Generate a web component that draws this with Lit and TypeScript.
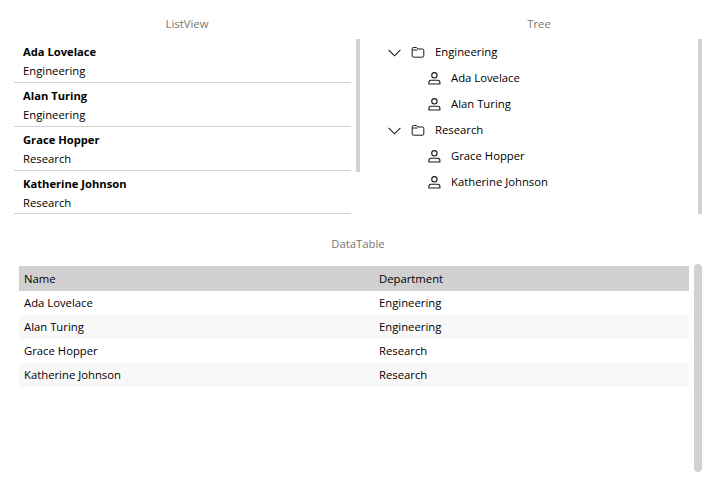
import { LitElement, html, css, svg } from 'lit';
import { customElement } from 'lit/decorators.js';

const PEOPLE = [
  { name: 'Ada Lovelace', dept: 'Engineering' },
  { name: 'Alan Turing', dept: 'Engineering' },
  { name: 'Grace Hopper', dept: 'Research' },
  { name: 'Katherine Johnson', dept: 'Research' },
];

const chevron = svg`<path d="M0.6 4.8 L6.5 10.8 L12.4 4.8" fill="none" stroke="#1a1a1a" stroke-width="1.1"/>`;
const folder = svg`<path d="M1.2 3.6 Q1.2 2.5 2.4 2.5 H5.5 L7 4 H11.6 Q12.8 4 12.8 5.2 V11 Q12.8 12.2 11.6 12.2 H2.4 Q1.2 12.2 1.2 11 Z M1.2 5 H6.5" fill="none" stroke="#1a1a1a" stroke-width="1"/>`;
const person = svg`<circle cx="6.4" cy="4.3" r="2.7" fill="none" stroke="#1a1a1a" stroke-width="1.1"/><path d="M0.9 13 V11.5 Q0.9 9.3 3 9.3 H9.8 Q11.9 9.3 11.9 11.5 V13 Z" fill="none" stroke="#1a1a1a" stroke-width="1.1"/>`;

@customElement('app-root')
export class AppRoot extends LitElement {
  static styles = css`
    :host {
      display: block;
      width: 716px;
      height: 486px;
      background: #fff;
      color: #000;
      font-family: 'Open Sans', 'Noto Sans', sans-serif;
      font-size: 11.3px;
      overflow: hidden;
    }

    .top {
      display: grid;
      grid-template-columns: 346px 326px;
      column-gap: 16px;
      padding: 0 14px;
      height: 234px;
    }

    .title {
      height: 39px;
      line-height: 48px;
      text-align: center;
      color: #767676;
    }

    .body {
      display: flex;
      height: 175px;
    }

    .list {
      width: 337px;
    }

    .list-item {
      height: 43px;
      padding-left: 9px;
      border-bottom: 1px solid #d2d2d2;
    }

    .list-item:last-child {
      height: 42px;
    }

    .list-item .name {
      font-weight: 700;
      font-size: 11.2px;
      line-height: 26px;
      height: 24px;
    }

    .list-item .dept {
      line-height: 16px;
    }

    .bar {
      background: #d2d2d2;
      width: 4px;
    }

    .list-bar {
      margin-left: 5px;
      height: 133px;
    }

    .tree {
      width: 322px;
    }

    .tree-row {
      display: flex;
      align-items: center;
      height: 26px;
      padding-left: 12px;
    }

    .tree-row span {
      margin-bottom: 2px;
    }

    .tree-row.leaf {
      padding-left: 52px;
    }

    .tree-row svg {
      width: 14px;
      height: 14px;
      flex: none;
    }

    .tree-row .folder {
      margin-left: 9px;
      margin-right: 10px;
    }

    .tree-row.leaf svg {
      margin-right: 9px;
    }

    .lower-title {
      height: 30px;
      line-height: 20px;
      text-align: center;
      color: #767676;
    }

    .lower {
      display: flex;
      padding-left: 19px;
    }

    .table {
      width: 670px;
      margin-top: 2px;
    }

    .row {
      display: grid;
      grid-template-columns: 355px 1fr;
      height: 24px;
      line-height: 24px;
      padding-left: 5px;
    }

    .row.head {
      height: 25px;
      line-height: 25px;
      background: #d0d0d0;
    }

    .row:nth-child(odd):not(.head) {
      background: #f8f8f8;
    }

    .table-bar {
      width: 8px;
      height: 208px;
      margin-left: 5px;
      border-radius: 4px;
    }
  `;

  render() {
    const groups = ['Engineering', 'Research'];
    return html`
      <div class="top">
        <section>
          <div class="title">ListView</div>
          <div class="body">
            <div class="list">
              ${PEOPLE.map(p => html`
                <div class="list-item">
                  <div class="name">${p.name}</div>
                  <div class="dept">${p.dept}</div>
                </div>
              `)}
            </div>
            <div class="bar list-bar"></div>
          </div>
        </section>
        <section>
          <div class="title">Tree</div>
          <div class="body">
            <div class="tree">
              ${groups.map(g => html`
                <div class="tree-row">
                  <svg viewBox="0 0 14 14">${chevron}</svg>
                  <svg class="folder" viewBox="0 0 14 14">${folder}</svg>
                  <span>${g}</span>
                </div>
                ${PEOPLE.filter(p => p.dept === g).map(p => html`
                  <div class="tree-row leaf">
                    <svg viewBox="0 0 14 14">${person}</svg>
                    <span>${p.name}</span>
                  </div>
                `)}
              `)}
            </div>
            <div class="bar"></div>
          </div>
        </section>
      </div>
      <div class="lower-title">DataTable</div>
      <div class="lower">
        <div class="table">
          <div class="row head"><span>Name</span><span>Department</span></div>
          ${PEOPLE.map(p => html`
            <div class="row"><span>${p.name}</span><span>${p.dept}</span></div>
          `)}
        </div>
        <div class="bar table-bar"></div>
      </div>
    `;
  }
}
